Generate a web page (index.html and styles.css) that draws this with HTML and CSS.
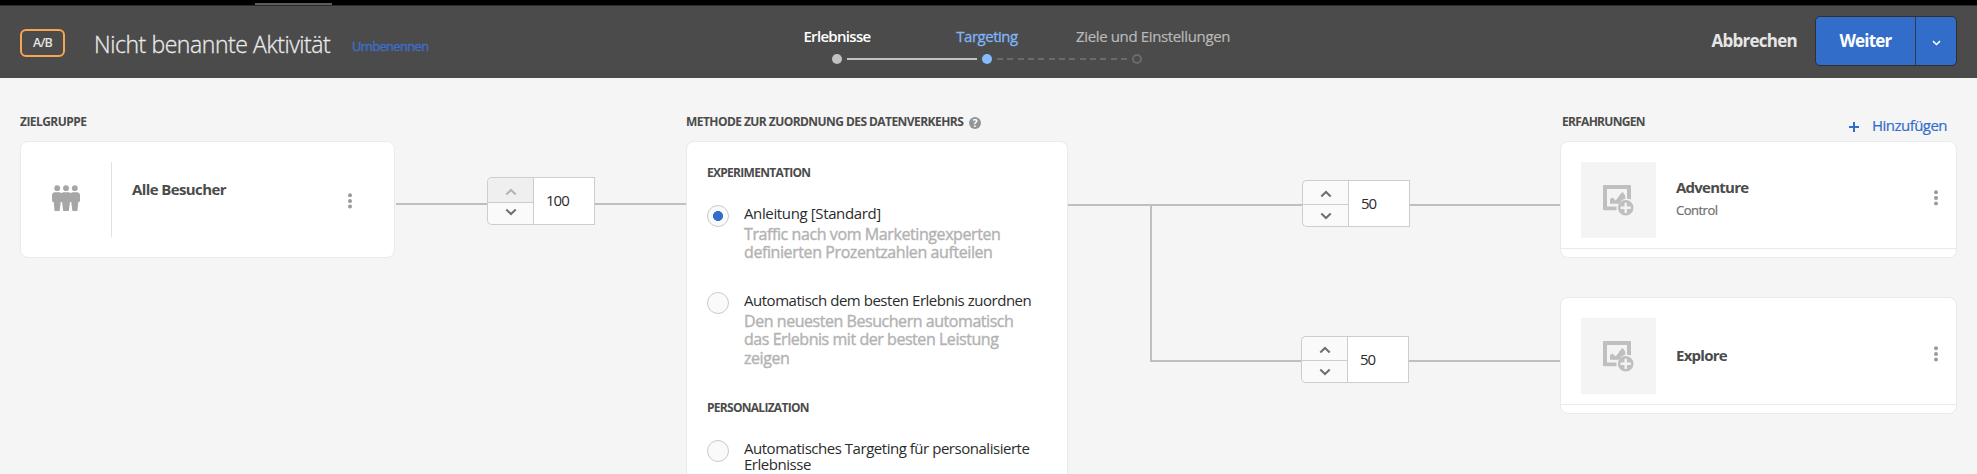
FILE: index.html
```html
<!DOCTYPE html>
<html lang="de">
<head>
<meta charset="utf-8">
<title>Nicht benannte Aktivität</title>
<link rel="stylesheet" href="styles.css">
</head>
<body>
<svg width="0" height="0" class="defs">
  <symbol id="people" viewBox="0 0 28 26">
    <circle cx="5.2" cy="3.2" r="2.9"/><circle cx="14" cy="3.2" r="2.9"/><circle cx="22.800" cy="3.2" r="2.9"/>
    <path d="M3 7.200h4.400l2 .7 2-.7h5.200l2 .7 2-.7H25c2 0 3 1.300 3 3.200v5.400c0 .8-.6 1.200-1.700 1.200L25.400 26h-5l-1.200-9h-1.200l-1.200 9h-5.600L10 17H8.800L7.600 26h-5L1.700 17C.6 17 0 16.600 0 15.800v-5.400C0 8.500 1 7.200 3 7.200z"/>
  </symbol>
  <symbol id="image-add" viewBox="0 0 32 31">
    <path fill-rule="evenodd" d="M1 0h26a1 1 0 0 1 1 1v13.500a8.400 8.400 0 0 0-4-.7V4H4v17.500h9.500v3.800H1a1 1 0 0 1-1-1V1a1 1 0 0 1 1-1z"/>
    <path d="M7 18.800v-4.600l2.300-1.600 3.500 3 5.800-8.100h1.700l2 3.400v2.900a9 9 0 0 0-6.100 5z"/>
    <path fill-rule="evenodd" d="M22.700 15a7.800 7.800 0 1 0 0 15.600 7.800 7.800 0 0 0 0-15.600zm-1.200 2.700h2.400v3.900h3.900V24h-3.900v3.900h-2.400V24h-3.900v-2.400h3.900z"/>
  </symbol>
  <symbol id="more" viewBox="0 0 4 16">
    <circle cx="2" cy="2.200" r="2"/><circle cx="2" cy="7.900" r="2"/><circle cx="2" cy="13.600" r="2"/>
  </symbol>
  <symbol id="up" viewBox="0 0 12 8"><path d="M1.300 6.500 6 2l4.700 4.500" fill="none" stroke="currentColor" stroke-width="2"/></symbol>
  <symbol id="down" viewBox="0 0 12 8"><path d="M1.300 1.500 6 6l4.700-4.500" fill="none" stroke="currentColor" stroke-width="2"/></symbol>
</svg>

<div class="topbar"><div class="topbar-tab"></div></div>

<header class="header">
  <div class="activity">
    <span class="badge">A/B</span>
    <h1 class="activity-name">Nicht benannte Aktivität</h1>
    <a class="rename">Umbenennen</a>
  </div>
  <nav class="steps">
    <div class="step-labels">
      <span class="step done">Erlebnisse</span>
      <span class="step current">Targeting</span>
      <span class="step next">Ziele und Einstellungen</span>
    </div>
    <div class="track">
      <i class="dot"></i><i class="seg"></i><i class="dot dot-current"></i><i class="seg seg-dashed"></i><i class="dot dot-next"></i>
    </div>
  </nav>
  <div class="actions">
    <span class="cancel">Abbrechen</span>
    <div class="split">
      <button class="next-btn">Weiter</button>
      <button class="menu-btn"><svg width="9" height="6"><use href="#down"/></svg></button>
    </div>
  </div>
</header>

<main class="flow">
  <section class="col audience">
    <div class="col-head"><h2 class="caption">ZIELGRUPPE</h2></div>
    <div class="card audience-card">
      <div class="audience-icon"><svg width="28" height="26"><use href="#people"/></svg></div>
      <span class="card-title">Alle Besucher</span>
      <svg class="more" width="4" height="16"><use href="#more"/></svg>
    </div>
  </section>

  <div class="link link-in">
    <i class="line"></i>
    <div class="spinner tall">
      <div class="spin-btns"><span class="spin off"><svg width="12" height="8"><use href="#up"/></svg></span><span class="spin"><svg width="12" height="8"><use href="#down"/></svg></span></div>
      <span class="value">100</span>
    </div>
    <i class="line grow"></i>
  </div>

  <section class="col method">
    <div class="col-head"><h2 class="caption">METHODE ZUR ZUORDNUNG DES DATENVERKEHRS</h2><span class="help">?</span></div>
    <div class="card method-card">
      <h3 class="caption group">EXPERIMENTATION</h3>
      <div class="option">
        <i class="radio on"></i>
        <div><div class="opt-name s1">Anleitung [Standard]</div>
        <div class="opt-desc">Traffic nach vom Marketingexperten<br>definierten Prozentzahlen aufteilen</div></div>
      </div>
      <div class="option">
        <i class="radio"></i>
        <div><div class="opt-name">Automatisch dem besten Erlebnis zuordnen</div>
        <div class="opt-desc three">Den neuesten Besuchern automatisch<br>das Erlebnis mit der besten Leistung<br>zeigen</div></div>
      </div>
      <h3 class="caption group">PERSONALIZATION</h3>
      <div class="option">
        <i class="radio"></i>
        <div><div class="opt-name">Automatisches Targeting für personalisierte<br>Erlebnisse</div></div>
      </div>
    </div>
  </section>

  <div class="branches">
    <div class="link link-a">
      <i class="line trunk"></i>
      <div class="spinner">
        <div class="spin-btns"><span class="spin"><svg width="12" height="8"><use href="#up"/></svg></span><span class="spin"><svg width="12" height="8"><use href="#down"/></svg></span></div>
        <span class="value">50</span>
      </div>
      <i class="line grow"></i>
    </div>
    <div class="link link-b">
      <i class="elbow"></i>
      <div class="spinner">
        <div class="spin-btns"><span class="spin"><svg width="12" height="8"><use href="#up"/></svg></span><span class="spin"><svg width="12" height="8"><use href="#down"/></svg></span></div>
        <span class="value">50</span>
      </div>
      <i class="line grow"></i>
    </div>
  </div>

  <section class="col experiences">
    <div class="col-head exp-head">
      <h2 class="caption exp-caption">ERFAHRUNGEN</h2>
      <a class="add"><svg width="10" height="10"><path d="M5 0v10M0 5h10" stroke="currentColor" stroke-width="2"/></svg>Hinzufügen</a>
    </div>
    <article class="card exp-card">
      <div class="exp-body">
        <div class="thumb"><svg width="32" height="31"><use href="#image-add"/></svg></div>
        <div class="exp-text first"><div class="card-title">Adventure</div><div class="sub">Control</div></div>
        <svg class="more" width="4" height="16"><use href="#more"/></svg>
      </div>
    </article>
    <article class="card exp-card">
      <div class="exp-body">
        <div class="thumb"><svg width="32" height="31"><use href="#image-add"/></svg></div>
        <div class="exp-text"><div class="card-title">Explore</div></div>
        <svg class="more" width="4" height="16"><use href="#more"/></svg>
      </div>
    </article>
  </section>
</main>
</body>
</html>
```
FILE: styles.css
```css
* { box-sizing: border-box; }
body {
  margin: 0;
  height: 474px;
  overflow: hidden;
  background: #f5f5f5;
  font: 15px/16px "Open Sans", "Noto Sans", sans-serif;
  letter-spacing: -0.48px;
  color: #2c2c2c;
  white-space: nowrap;
}
h1, h2, h3 { margin: 0; }
.defs { position: absolute; }
svg { display: block; fill: currentColor; flex: none; }
i { display: block; flex: none; }

.topbar { height: 6px; background: #000; border-bottom: 1px solid #2b2b2b; padding: 3px 0 0 255px; }
.topbar-tab { width: 77px; height: 2px; background: #5c5c5c; }

.header { height: 72px; background: #4b4b4b; display: flex; padding: 0 20px; }
.activity { width: 742px; display: flex; align-items: flex-start; }
.badge {
  width: 45px; height: 28px; margin-top: 23px;
  border: 2px solid #f9a44e; border-radius: 6px;
  color: #e4e4e4; font-size: 12.500px; font-weight: 600; line-height: 23px;
  text-align: center; letter-spacing: -0.8px;
}
.activity-name {
  margin: 23px 0 0 29px; width: 258px;
  font-size: 23px; font-weight: 300; line-height: 30px; letter-spacing: -0.43px; color: #eaeaea;
  -webkit-text-stroke: 0.3px;
}
.rename { margin-top: 32px; font-size: 13px; line-height: 16px; letter-spacing: -0.68px; color: #3c6fd0; -webkit-text-stroke: 0.3px; }

.steps { width: 450px; padding-top: 22px; }
.step-labels { display: grid; grid-template-columns: repeat(3, 150px); line-height: 16px; text-align: center; }
.done { color: #fff; font-weight: 600; letter-spacing: -0.68px; }
.current { color: #80b5f9; -webkit-text-stroke: 0.3px; }
.next { color: #b9b9b9; text-align: left; padding-left: 14px; letter-spacing: -0.36px; -webkit-text-stroke: 0.2px; }
.track { display: flex; align-items: center; gap: 5px; margin: 10px 0 0 70px; }
.dot { width: 10px; height: 10px; border-radius: 50%; background: #c2c2c2; }
.dot-current { background: #87bcfc; }
.dot-next { background: none; border: 2px solid #6b6b6b; }
.seg { width: 130px; height: 2px; background: #c2c2c2; }
.seg-dashed { background: repeating-linear-gradient(90deg, #6b6b6b 0 6px, transparent 6px 10.330px); }

.actions { margin-left: auto; display: flex; }
.cancel { margin: 25px 18px 0 0; font-size: 17px; font-weight: 700; line-height: 20px; letter-spacing: -0.75px; color: #e6e6e6; }
.split { display: flex; width: 142px; height: 50px; margin-top: 10px; border: 1px solid #2c2f36; border-radius: 5px; background: #326ec9; overflow: hidden; }
.split button { border: 0; padding: 0; background: none; color: #fff; font: 700 17px/48px "Open Sans", sans-serif; letter-spacing: -0.8px; }
.next-btn { width: 99px; }
.split .menu-btn { flex: 1; border-left: 1px solid #2c3a52; display: flex; align-items: center; justify-content: center; padding-top: 4px; }

.flow { display: grid; grid-template-columns: 375px 291px 382px 492px 397px; padding: 0 20px; align-items: start; }
.col-head { height: 63px; padding-top: 35px; display: flex; }
.caption { font-size: 12px; font-weight: 700; line-height: 18px; letter-spacing: -0.56px; color: #4b4b4b; }
.help {
  width: 12px; height: 12px; margin: 4px 0 0 6px; border-radius: 50%;
  background: #959595; color: #fff; font-size: 10px; font-weight: 700; line-height: 12px; text-align: center; letter-spacing: 0;
}
.card { background: #fff; border: 1px solid #eaeaea; border-radius: 8px; }
.card-title { font-weight: 700; line-height: 20px; letter-spacing: -0.6px; color: #4b4b4b; }
.more { color: #9b9b9b; }

.audience-card { height: 117px; display: flex; padding-top: 20px; }
.audience-icon { width: 91px; height: 75px; border-right: 1px solid #e1e1e1; padding: 23px 0 0 31px; color: #a6a6a6; }
.audience-card .card-title { margin: 17px 0 0 20px; flex: 1; }
.audience-card .more { margin: 31px 42px 0 0; }

.link { display: flex; align-items: flex-start; }
.line { height: 2px; background: #bfbfbf; }
.grow { flex: 1; }
.link-in { margin-top: 99px; padding-left: 1px; }
.link-in .line { margin-top: 26px; }
.link-in .line:first-child { width: 91px; }
.spinner { width: 108px; height: 47px; display: flex; }
.spinner.tall { height: 48px; }
.spin-btns { width: 46px; display: flex; flex-direction: column; border: 1px solid #cdcdcd; border-right: 0; border-radius: 5px 0 0 5px; background: #fafafa; overflow: hidden; }
.spin { flex: 1; display: flex; align-items: center; justify-content: center; color: #6e6e6e; padding-top: 2px; }
.spin + .spin { border-top: 1px solid #cdcdcd; padding: 0; }
.spin.off { background: #efefef; color: #b3b3b3; padding-top: 4px; }
.spin.off + .spin { padding-bottom: 2px; }
.value { flex: 1; border: 1px solid #cdcdcd; background: #fff; padding-left: 12px; line-height: 45px; letter-spacing: -1px; }

.method-card { height: 340px; padding: 22px 0 0 20px; border-bottom: 0; border-radius: 8px 8px 0 0; }
.group { margin-bottom: 23px; letter-spacing: -0.72px; }
.option { display: flex; gap: 15px; margin-bottom: 31px; }
.option + .group { margin-top: 32px; }
.radio { width: 22px; height: 22px; border: 1px solid #cacaca; border-radius: 50%; background: #fafafa; }
.radio.on { background: radial-gradient(circle, #326ec9 4.700px, #fafafa 5.300px); }
.opt-name { letter-spacing: -0.47px; }
.opt-name.s1 { letter-spacing: -0.37px; }
.opt-desc { margin-top: 4px; font-size: 16px; line-height: 18px; letter-spacing: -0.41px; color: #b3b3b3; -webkit-text-stroke: 0.4px; }
.opt-desc.three { line-height: 18.400px; letter-spacing: -0.45px; }

.link-a { margin-top: 102px; }
.link-a .line { margin-top: 24px; }
.trunk { width: 234px; }
.link-b { margin-top: -21px; height: 177px; padding-left: 82px; }
.elbow { width: 151px; height: 156px; border: solid #bfbfbf; border-width: 0 0 2px 2px; }
.link-b .spinner { align-self: flex-end; }
.link-b .line { margin-top: 154px; }

.exp-head { padding-right: 10px; }
.exp-caption { flex: 1; padding-left: 2px; letter-spacing: -0.72px; }
.add { display: flex; gap: 13px; margin-top: 4px; line-height: 16px; letter-spacing: -0.53px; color: #326ec9; -webkit-text-stroke: 0.2px; }
.add svg { margin-top: 5px; }
.exp-card { height: 117px; margin-bottom: 39px; }
.exp-body { height: 107px; display: flex; padding: 20px 18px 0 20px; border-bottom: 1px solid #eaeaea; }
.thumb { width: 75px; height: 76px; background: #f4f4f4; color: #bfbfbf; padding: 23px 0 0 22px; }
.exp-text { flex: 1; padding: 27px 0 0 20px; }
.exp-text.first { padding-top: 15px; }
.exp-text .card-title { letter-spacing: -0.75px; }
.sub { font-size: 13px; line-height: 18px; margin-top: 4px; letter-spacing: -0.5px; color: #6e6e6e; -webkit-text-stroke: 0.2px; }
.exp-body .more { margin-top: 28px; }
```
